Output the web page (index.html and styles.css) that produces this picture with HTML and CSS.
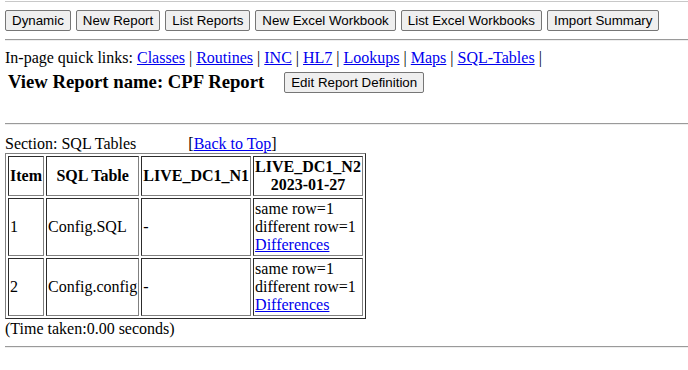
FILE: index.html
```html
<!DOCTYPE html>
<html lang="en">
<head>
    <meta charset="UTF-8">
    <title>View Report</title>
    <link rel="stylesheet" href="styles.css">
</head>
<body>
    <div class="top-rule"></div>

    <!-- Toolbar -->
    <div class="toolbar">
        <button>Dynamic</button>
        <button>New Report</button>
        <button>List Reports</button>
        <button>New Excel Workbook</button>
        <button>List Excel Workbooks</button>
        <button>Import Summary</button>
    </div>
    <hr>

    <div class="quick-links">In-page quick links: <a href="#">Classes</a> | <a href="#">Routines</a> | <a href="#">INC</a> | <a href="#">HL7</a> | <a href="#">Lookups</a> | <a href="#">Maps</a> | <a href="#">SQL-Tables</a> |</div>

    <div class="report-title">
        <h3>View Report name: CPF Report</h3>
        <button>Edit Report Definition</button>
    </div>

    <hr class="section-rule">

    <!-- SQL Tables section -->
    <div class="section-head">
        <span>Section: SQL Tables</span>
        <span class="back-top">[<a href="#">Back to Top</a>]</span>
    </div>
    <table class="report-table">
        <tr>
            <th>Item</th>
            <th>SQL Table</th>
            <th>LIVE_DC1_N1</th>
            <th>LIVE_DC1_N2<br>2023-01-27</th>
        </tr>
        <tr>
            <td>1</td>
            <td>Config.SQL</td>
            <td>-</td>
            <td>same row=1<br>different row=1<br><a href="#">Differences</a></td>
        </tr>
        <tr>
            <td>2</td>
            <td>Config.config</td>
            <td>-</td>
            <td>same row=1<br>different row=1<br><a href="#">Differences</a></td>
        </tr>
    </table>
    <div class="time-taken">(Time taken:0.00 seconds)</div>
    <hr class="end-rule">
</body>
</html>
```

FILE: styles.css
```css
body {
    margin: 0 0 0 5px;
    font-family: "Liberation Serif", "Times New Roman", serif;
    font-size: 16px;
    color: #000;
    background: #fff;
}

a {
    color: #0000ee;
}

.top-rule {
    margin-left: -5px;
    border-top: 1px solid #c8c8c8;
    margin-top: 1px;
}

button {
    font-family: Arial, "Liberation Sans", sans-serif;
    font-size: 13.33px;
    padding: 1px 6px;
    height: 21px;
    border: 1px solid #767676;
    border-radius: 2px;
    background-color: #efefef;
    color: #000;
}

.toolbar {
    margin-top: 8px;
    display: flex;
    gap: 5px;
}

hr {
    margin: 8px 0;
    border: none;
    border-top: 1px solid #9a9a9a;
    border-bottom: 1px solid #eeeeee;
}

.quick-links {
    margin-top: 8px;
    line-height: 18px;
}

.report-title {
    display: flex;
    align-items: center;
    gap: 20px;
    margin-top: 4px;
    padding-left: 3px;
}

.report-title h3 {
    margin: 0;
    font-size: 18.72px;
}

.section-rule {
    margin-top: 30px;
}

.section-head {
    margin-top: 10px;
    line-height: 18px;
}

.back-top {
    margin-left: 48px;
}

.report-table {
    border: 1px outset #808080;
    border-spacing: 2px;
}

.report-table th,
.report-table td {
    border: 1px inset #808080;
    padding: 1px;
}

.report-table td {
    text-align: left;
}

.time-taken {
    line-height: 19px;
}

.end-rule {
    margin-top: 8px;
}
```
